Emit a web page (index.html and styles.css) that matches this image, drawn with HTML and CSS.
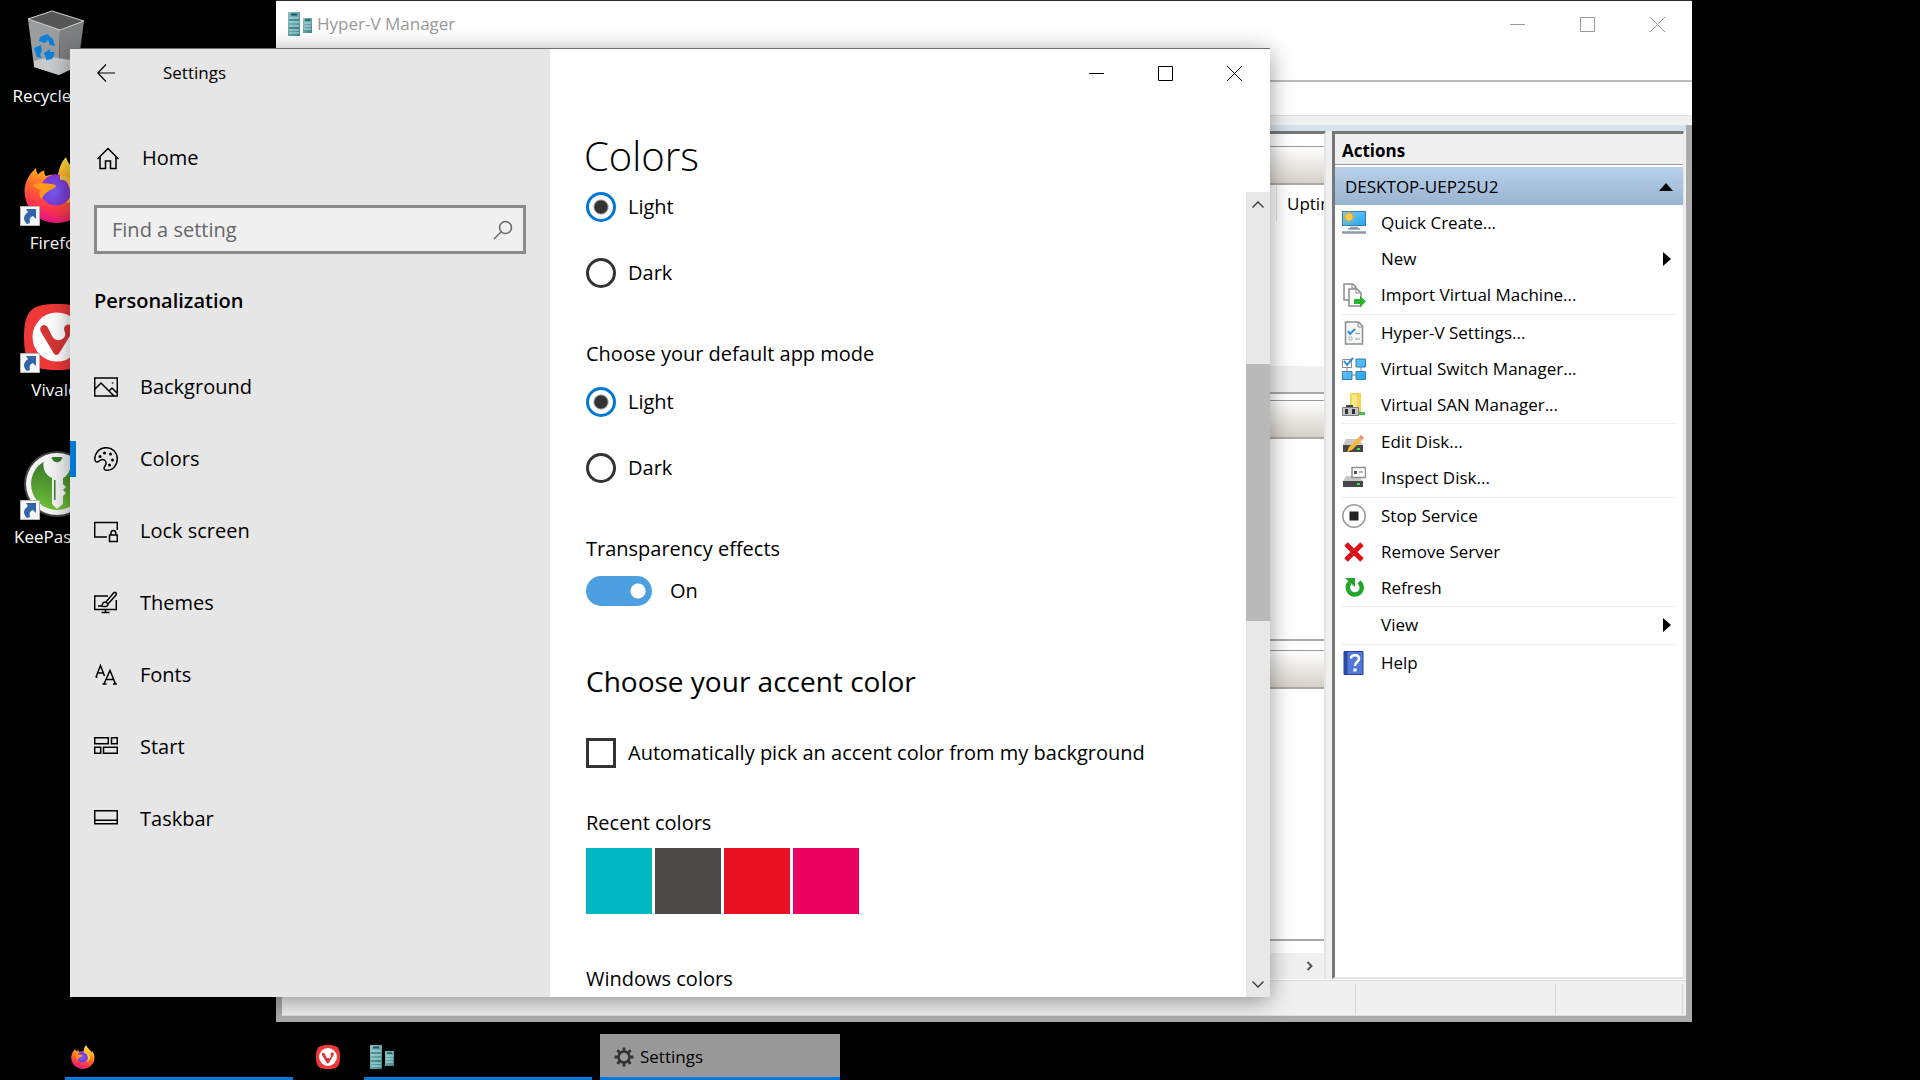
FILE: index.html
```html
<!DOCTYPE html>
<html lang="en">
<head>
    <meta charset="UTF-8">
    <meta name="viewport" content="width=device-width, initial-scale=1.0">
    <title>Desktop</title>
    <link rel="stylesheet" href="styles.css">
</head>
<body>
    <!-- Shared icons -->
    <svg class="defs" aria-hidden="true">
        <defs>
            <linearGradient id="fx-body" x1="0.7" y1="0" x2="0.35" y2="1">
                <stop offset="0" stop-color="#fff44f"/>
                <stop offset="0.3" stop-color="#ffb01f"/>
                <stop offset="0.55" stop-color="#ff6a2a"/>
                <stop offset="0.8" stop-color="#ff3450"/>
                <stop offset="1" stop-color="#e2108c"/>
            </linearGradient>
            <radialGradient id="fx-globe" cx="0.45" cy="0.55" r="0.6">
                <stop offset="0" stop-color="#7a5cf5"/>
                <stop offset="0.6" stop-color="#7542d8"/>
                <stop offset="1" stop-color="#a030cf"/>
            </radialGradient>
            <linearGradient id="teal" x1="0" y1="0" x2="1" y2="1">
                <stop offset="0" stop-color="#8cc0c4"/>
                <stop offset="1" stop-color="#3f868c"/>
            </linearGradient>
            <linearGradient id="screen" x1="0" y1="0" x2="1" y2="1">
                <stop offset="0" stop-color="#7fd0fb"/>
                <stop offset="1" stop-color="#22a4f5"/>
            </linearGradient>
            <linearGradient id="kp" x1="0" y1="0" x2="0" y2="1">
                <stop offset="0" stop-color="#35762a"/>
                <stop offset="1" stop-color="#70c038"/>
            </linearGradient>
        </defs>
        <symbol id="firefox" viewBox="0 0 66 66">
            <path fill="url(#fx-body)" d="M12 11C12 14 13 16 14 17.500C16 15 18 14 20.500 13.500C20 16 20.500 17.500 22 19C26 17.500 30 17.500 34 18C35 11 38 4 42 0C44 8 50 11 54 16C56 18.500 57 21 57 21L58 16C66 27 67 40 60 51C54 60 44 66 33 66C15 66 1 53 0.500 34C0.500 26 5 17 12 11Z"/>
            <circle cx="32" cy="33" r="15.500" fill="url(#fx-globe)"/>
            <path fill="#ff9a1f" d="M9 28C16 25 23 27 27 27C30 27 32 28 32 29C31 32 27 32 25 34C21 36 19 39 17 42C15 37 15 34 17 33C13 32 11 31 9 28Z"/>
            <path fill="#ffd23a" d="M36 23C41 22 44 26 45 30C48 35 47 42 42 46C49 45 54 38 52 30C50 24 46 20 36 18Z" opacity="0.9"/>
        </symbol>
        <symbol id="vivaldi" viewBox="0 0 66 66">
            <path fill="#ef3939" d="M33 0C58 0 66 6 66 33C66 60 58 66 33 66C8 66 0 60 0 33C0 6 8 0 33 0Z"/>
            <circle cx="33" cy="33" r="24.500" fill="#fff"/>
            <path fill="#d63535" d="M17 28C14 22 21 18 24 24L28 32C31 38 39 37 41 32C42 29 40 27 40 25C40 19 49 19 49 25C49 27 48 28 47 30L36 48C34 52 31 52 29 48Z"/>
        </symbol>
        <symbol id="servers" viewBox="0 0 24 24">
            <rect x="0" y="0" width="12" height="24" fill="url(#teal)"/>
            <path d="M3 2.500h6" stroke="#1f5860" stroke-width="2"/>
            <path d="M1 6h10M1 10h10M1 14h10M1 18h10M1 21h10" stroke="#b9e0e2" stroke-width="1"/>
            <path d="M1 8h10M1 16h10" stroke="#2d747b" stroke-width="1"/>
            <rect x="15" y="6" width="9" height="15" fill="url(#teal)"/>
            <path d="M17 8h5" stroke="#1f5860" stroke-width="1.500"/>
            <path d="M16 11h7M16 14h7M16 17h7" stroke="#b9e0e2"/>
        </symbol>
        <symbol id="shortcut" viewBox="0 0 20 20">
            <path d="M0.500 0.500h19v19h-19z" fill="#f6f6f6" stroke="#b5b5b5"/>
            <path fill="#3264a8" d="M6 3h10v10l-3-3c-3 1-4 3-3 7l-3 1c-5-5-3-9 1-12z"/>
        </symbol>
    </svg>

    <div class="desktop">
        <div class="shortcuts">
            <a class="shortcut" href="#">
                <svg class="shortcut-icon" viewBox="0 0 66 66">
                    <path fill="#565656" d="M4 9L28 1L60 11L36 20Z"/>
                    <path fill="#9a9c9d" d="M4 9L36 20L35 65L10 57Z"/>
                    <path fill="#7d7f80" d="M36 20L60 11L54 56L35 65Z"/>
                    <path fill="#c9cacc" d="M10 51L26 47L54 51L54 56L35 65L10 57Z"/>
                    <path fill="none" stroke="#d5d5d5" stroke-width="1" d="M4 9L28 1L60 11L36 20Z"/>
                    <path fill="#0f80d8" d="M16 27l7-3 6 5 2 7-5-1-2-5-3 3-6-2zM10 38l7-3 1 6-2 4 2 3-5-1zM20 43l6-4v3h5l-3 7-6 1 1 2z"/>
                </svg>
                <span>Recycle Bin</span>
            </a>
            <a class="shortcut" href="#">
                <svg class="shortcut-icon"><use href="#firefox"/></svg>
                <svg class="badge"><use href="#shortcut"/></svg>
                <span>Firefox</span>
            </a>
            <a class="shortcut" href="#">
                <svg class="shortcut-icon"><use href="#vivaldi"/></svg>
                <svg class="badge"><use href="#shortcut"/></svg>
                <span>Vivaldi</span>
            </a>
            <a class="shortcut" href="#">
                <svg class="shortcut-icon" viewBox="0 0 66 66">
                    <circle cx="33" cy="33" r="33" fill="#444"/>
                    <circle cx="33" cy="33" r="31" fill="#f4f4f4"/>
                    <circle cx="33" cy="33" r="26" fill="url(#kp)"/>
                    <path fill="#f4f4f4" d="M20 8h26c2 9-1 16-7 19v6l3 3-3 3 3 3-3 3v8l-6 5-5-5V27c-7-3-10-10-8-19z"/>
                    <path fill="#357a2a" d="M28 6h10c0 7-10 7-10 0zM30 29h1.500v20H30z"/>
                </svg>
                <svg class="badge"><use href="#shortcut"/></svg>
                <span>KeePassXC</span>
            </a>
        </div>

        <section class="window hyperv" aria-label="Hyper-V Manager">
            <header class="titlebar hyperv-title">
                <svg class="icon24"><use href="#servers"/></svg>
                <span class="title">Hyper-V Manager</span>
                <button class="winbtn" aria-label="Minimize"><svg viewBox="0 0 15 15"><path d="M0 7.500h15"/></svg></button>
                <button class="winbtn" aria-label="Maximize"><svg viewBox="0 0 15 15"><path d="M0.500 0.500h14v14h-14z"/></svg></button>
                <button class="winbtn" aria-label="Close"><svg viewBox="0 0 15 15"><path d="M0 0l15 15M15 0L0 15"/></svg></button>
            </header>
            <div class="menubar"></div>
            <div class="toolbar"></div>
            <div class="toolbar-edge"></div>
            <div class="frame">
                <div class="panes">
                    <div class="results">
                        <div class="result-section machines">
                            <div class="section-head"></div>
                            <div class="columns"><span class="column">Uptime</span></div>
                            <div class="list"></div>
                            <div class="hscroll"></div>
                        </div>
                        <div class="result-section checkpoints">
                            <div class="section-head"></div>
                        </div>
                        <div class="result-section details">
                            <div class="section-head"></div>
                        </div>
                        <div class="hscroll">
                            <svg viewBox="0 0 8 10"><path d="M1.500 1l4 4-4 4"/></svg>
                        </div>
                    </div>
                    <aside class="actions">
                        <h2>Actions</h2>
                        <button class="host">DESKTOP-UEP25U2
                            <svg viewBox="0 0 14 8"><path d="M0 8l7-8 7 8z"/></svg>
                        </button>
                        <div class="group">
                            <button class="action">
                                <svg viewBox="0 0 24 24">
                                    <rect x="0.500" y="0.500" width="23" height="14" fill="url(#screen)" stroke="#3b7da5"/>
                                    <path d="M8 16.500h8M6 18h12" stroke="#8b9aab" stroke-width="1.500"/>
                                    <path d="M0 21.500h24" stroke="#8b9aab" stroke-width="2.500"/>
                                    <path d="M7 0v12M1 6h12M3 2l8 8M11 2l-8 8" stroke="#f0a21c" stroke-width="1.500"/>
                                    <circle cx="7" cy="6" r="3.500" fill="#ffc93b"/>
                                </svg>
                                Quick Create...
                            </button>
                            <button class="action more">
                                <svg></svg>
                                New
                                <svg class="arrow" viewBox="0 0 8 14"><path d="M0 0l8 7-8 7z"/></svg>
                            </button>
                            <button class="action">
                                <svg viewBox="0 0 24 24">
                                    <path d="M2 1h9l3 3v13H2z" fill="#fff" stroke="#8c8c8c" stroke-width="1.500"/>
                                    <path d="M7 6h8l4 4v13H7z" fill="#fff" stroke="#8c8c8c" stroke-width="1.500"/>
                                    <path d="M10 1v4h4M14 6v4h4" fill="none" stroke="#8c8c8c"/>
                                    <path d="M12 16h6v-3l6 5.500-6 5.500v-3h-6z" fill="#28b52d"/>
                                </svg>
                                Import Virtual Machine...
                            </button>
                        </div>
                        <div class="group">
                            <button class="action">
                                <svg viewBox="0 0 24 24">
                                    <path d="M3.500 1h13l4 4v18h-17z" fill="#f4f6f8" stroke="#8c8c8c" stroke-width="1.500"/>
                                    <path d="M16 1v5h5" fill="none" stroke="#8c8c8c"/>
                                    <path d="M6 10l2 3 5-5" fill="none" stroke="#2b8fe0" stroke-width="2"/>
                                    <path d="M13 12.500h5M13 18h5" stroke="#9a9a9a"/>
                                    <path d="M7 16h3v3H7z" fill="none" stroke="#b5b5b5"/>
                                </svg>
                                Hyper-V Settings...
                            </button>
                            <button class="action">
                                <svg viewBox="0 0 24 24">
                                    <path d="M5 10v4M19 9v6M9 18h7" stroke="#8a8a8a"/>
                                    <path d="M0.500 2.500h9v8h-9z" fill="#fff" stroke="#8a8a8a"/>
                                    <path d="M14 2h9.500v8H14zM0.500 14.500h9.500v8H0.500zM14 14.500h9.500v8H14z" fill="url(#screen)" stroke="#3b7da5"/>
                                    <path d="M2 4l3 4 6-7" fill="none" stroke="#2b8fe0" stroke-width="2"/>
                                </svg>
                                Virtual Switch Manager...
                            </button>
                            <button class="action">
                                <svg viewBox="0 0 24 24">
                                    <path d="M8 0h11v20H8z" fill="#f5d552"/>
                                    <path d="M10 2h5v12h-5z" fill="#fae88f"/>
                                    <path d="M16 19h7v3h-7z" fill="#46c24a"/>
                                    <path d="M4 13h7" stroke="#444" stroke-width="2"/>
                                    <path d="M0.500 14.500h16v8h-16z" fill="#c4c4c8" stroke="#7e7e82"/>
                                    <path d="M3 16h3v5H3zM10 16h3v5h-3z" fill="#333"/>
                                </svg>
                                Virtual SAN Manager...
                            </button>
                        </div>
                        <div class="group">
                            <button class="action">
                                <svg viewBox="0 0 24 24">
                                    <path d="M4 9h13l4 6H1z" fill="#c8c8c8"/>
                                    <path d="M1 15h20v7H1z" fill="#454545"/>
                                    <path d="M15 18h3v2h-3z" fill="#3fe04b"/>
                                    <path d="M5 22l2-5L17 7l3 3L10 20z" fill="#f5b836"/>
                                    <path d="M17 7l2-2 3 3-2 2z" fill="#e88888"/>
                                </svg>
                                Edit Disk...
                            </button>
                            <button class="action">
                                <svg viewBox="0 0 24 24">
                                    <path d="M4 10h13l4 5H1z" fill="#c8c8c8"/>
                                    <path d="M1 15h20v6H1z" fill="#454545"/>
                                    <path d="M15 17h3v2h-3z" fill="#3fe04b"/>
                                    <path d="M10 1.500h13.500v10H10z" fill="#fff" stroke="#8a8f94" stroke-width="1.500"/>
                                    <path d="M12 5h3v3h-3z" fill="#555"/>
                                    <path d="M17 6h4" stroke="#777"/>
                                </svg>
                                Inspect Disk...
                            </button>
                        </div>
                        <div class="group">
                            <button class="action">
                                <svg viewBox="0 0 24 24">
                                    <circle cx="12" cy="12" r="11.250" fill="#fff" stroke="#999" stroke-width="1.500"/>
                                    <path d="M7.500 7.500h9v9h-9z" fill="#222"/>
                                </svg>
                                Stop Service
                            </button>
                            <button class="action">
                                <svg viewBox="0 0 24 24"><path d="M4 4l16 16M20 4L4 20" stroke="#e00f17" stroke-width="5"/></svg>
                                Remove Server
                            </button>
                            <button class="action">
                                <svg viewBox="0 0 24 24">
                                    <path d="M8 6.500a7 7 0 1 0 9-0.500" fill="none" stroke="#22a52b" stroke-width="4.500"/>
                                    <path d="M3 2h10v9z" fill="#22a52b"/>
                                </svg>
                                Refresh
                            </button>
                        </div>
                        <div class="group">
                            <button class="action more">
                                <svg></svg>
                                View
                                <svg class="arrow" viewBox="0 0 8 14"><path d="M0 0l8 7-8 7z"/></svg>
                            </button>
                        </div>
                        <div class="group">
                            <button class="action">
                                <svg viewBox="0 0 24 24">
                                    <path d="M2 0.500h19v23H2z" fill="#5577d8" stroke="#20409c"/>
                                    <path d="M2 0.500h3.500v23H2z" fill="#2a4aa6"/>
                                    <path d="M9 7.500C9 3 17 3 17 7.500C17 11 13 11 13 15" fill="none" stroke="#fff" stroke-width="2.500"/>
                                    <circle cx="13" cy="19" r="1.800" fill="#fff"/>
                                </svg>
                                Help
                            </button>
                        </div>
                    </aside>
                </div>
                <div class="statusbar"><span></span><span></span><span></span></div>
            </div>
        </section>

        <section class="window settings" aria-label="Settings">
            <nav class="sidebar">
                <header class="titlebar">
                    <button class="back" aria-label="Back"><svg viewBox="0 0 18 18"><path d="M18 9H1M9 0.500L0.800 9 9 17.500"/></svg></button>
                    <span class="title">Settings</span>
                </header>
                <a class="nav-item home" href="#">
                    <svg viewBox="0 0 24 24"><path d="M1.500 13L12 2.500 22.500 13M4 11v11.500h5.500V15h5v7.500H20V11"/></svg>
                    Home
                </a>
                <div class="search">
                    <input type="text" placeholder="Find a setting" aria-label="Find a setting">
                    <svg viewBox="0 0 20 20"><circle cx="12.500" cy="7.500" r="6"/><path d="M8.500 11.500L1 19"/></svg>
                </div>
                <h2>Personalization</h2>
                <a class="nav-item" href="#">
                    <svg viewBox="0 0 24 24"><path d="M0.700 3h22.600v18H0.700zM1 14l6-6 13 13M15 16l3-3 5 5"/><circle class="fill" cx="18.500" cy="8" r="0.800"/></svg>
                    Background
                </a>
                <a class="nav-item selected" href="#">
                    <svg viewBox="0 0 24 24">
                        <path d="M12 0.700C19 0.700 23.300 6 23.300 12C23.300 18 19 23.300 13 23.300C9.500 23.300 9.500 21 11 19C13 16 12 12.500 8.500 12.500C6 12.500 5 15 3 15C-1.500 15 0.700 0.700 12 0.700Z"/>
                        <g class="fill"><circle cx="6" cy="9.500" r="1.500"/><circle cx="10.500" cy="6" r="1.500"/><circle cx="16.500" cy="7" r="1.500"/><circle cx="18.500" cy="13" r="1.500"/><circle cx="15.500" cy="18" r="1.500"/></g>
                    </svg>
                    Colors
                </a>
                <a class="nav-item" href="#">
                    <svg viewBox="0 0 24 24"><path d="M13 18H0.700V3.500h22.600V11M15.500 16h7.800v6.500h-7.800zM17 16v-2c0-3.500 4.800-3.500 4.800 0v2"/></svg>
                    Lock screen
                </a>
                <a class="nav-item" href="#">
                    <svg viewBox="0 0 24 24"><path d="M14 5H0.700v13.500h21.600V9M11.500 18.500v3M7.500 21.500h8M4 15h4c0-3 2-4 4-4M12 11l7.500-9c1.500-1.500 3.500 0 2.500 2l-8 9M12 11l2 2c0 3-4 3-6 2"/></svg>
                    Themes
                </a>
                <a class="nav-item" href="#">
                    <svg viewBox="0 0 24 24"><path d="M2 14L6.500 2.500 10.500 13M3.500 10h6M10 21L16 7.500 21.500 21M12 16.500h8M8.500 21h4M19 21h4M1.500 14h2"/></svg>
                    Fonts
                </a>
                <a class="nav-item" href="#">
                    <svg viewBox="0 0 24 24"><path d="M0.700 2.700h13.600v6H0.700zM17.500 2.700h5.800v6h-5.800zM0.700 12.200h6v6h-6zM9.500 12.200h13.800v6H9.500z"/></svg>
                    Start
                </a>
                <a class="nav-item" href="#">
                    <svg viewBox="0 0 24 24"><path d="M0.700 3.700h22.600v13H0.700zM1 13.300h22"/></svg>
                    Taskbar
                </a>
            </nav>

            <main class="page">
                <header class="titlebar controls">
                    <button class="winbtn" aria-label="Minimize"><svg viewBox="0 0 15 15"><path d="M0 7.500h15"/></svg></button>
                    <button class="winbtn" aria-label="Maximize"><svg viewBox="0 0 15 15"><path d="M0.500 0.500h14v14h-14z"/></svg></button>
                    <button class="winbtn" aria-label="Close"><svg viewBox="0 0 15 15"><path d="M0 0l15 15M15 0L0 15"/></svg></button>
                </header>
                <h1>Colors</h1>
                <div class="scroller">
                    <div class="content">
                        <div class="choices" role="radiogroup" aria-label="Default Windows mode">
                            <label class="choice"><input type="radio" name="windows-mode" checked>Light</label>
                            <label class="choice"><input type="radio" name="windows-mode">Dark</label>
                        </div>
                        <p class="caption" id="app-mode">Choose your default app mode</p>
                        <div class="choices" role="radiogroup" aria-labelledby="app-mode">
                            <label class="choice"><input type="radio" name="app-mode" checked>Light</label>
                            <label class="choice"><input type="radio" name="app-mode">Dark</label>
                        </div>
                        <p class="caption" id="transparency">Transparency effects</p>
                        <label class="choice toggle"><input type="checkbox" aria-labelledby="transparency" checked>On</label>
                        <h2>Choose your accent color</h2>
                        <label class="choice"><input type="checkbox">Automatically pick an accent color from my background</label>
                        <p class="caption recent">Recent colors</p>
                        <div class="swatches">
                            <button class="swatch teal" aria-label="Teal"></button>
                            <button class="swatch gray" aria-label="Gray"></button>
                            <button class="swatch red" aria-label="Red"></button>
                            <button class="swatch pink" aria-label="Pink"></button>
                        </div>
                        <p class="caption">Windows colors</p>
                    </div>
                    <div class="scrollbar">
                        <button aria-label="Scroll up"><svg viewBox="0 0 12 7"><path d="M0.500 6.500L6 1l5.500 5.500"/></svg></button>
                        <div class="track"><div class="thumb"></div></div>
                        <button aria-label="Scroll down"><svg viewBox="0 0 12 7"><path d="M0.500 0.500L6 6l5.500-5.500"/></svg></button>
                    </div>
                </div>
            </main>
        </section>

        <footer class="taskbar">
            <button class="task running" aria-label="Firefox"><svg><use href="#firefox"/></svg></button>
            <button class="task pinned" aria-label="Vivaldi"><svg><use href="#vivaldi"/></svg></button>
            <button class="task running" aria-label="Hyper-V Manager"><svg><use href="#servers"/></svg></button>
            <button class="task running active">
                <svg class="gear" viewBox="0 0 20 20">
                    <circle cx="10" cy="10" r="5.500" fill="none" stroke="#333" stroke-width="2.500"/>
                    <path d="M10 0.500v4M10 15.500v4M0.500 10h4M15.500 10h4M3.300 3.300l2.800 2.800M13.900 13.900l2.800 2.800M16.700 3.300l-2.800 2.800M6.100 13.900l-2.800 2.800" stroke="#333" stroke-width="2.800"/>
                </svg>
                Settings
            </button>
        </footer>
    </div>
</body>
</html>
```

FILE: styles.css
```css
* {
    box-sizing: border-box;
}

body {
    margin: 0;
    background: #000;
    color: #000;
    font-family: "Open Sans", sans-serif;
    font-size: 20px;
    line-height: 28px;
}

button {
    border: 0;
    padding: 0;
    background: none;
    color: inherit;
    font: inherit;
    text-align: left;
}

a {
    color: inherit;
    text-decoration: none;
}

h1, h2, p {
    margin: 0;
    font-weight: normal;
}

.defs {
    position: absolute;
    width: 0;
    height: 0;
}

.desktop {
    position: relative;
    height: 100vh;
    overflow: hidden;
}

/* Desktop icons */
.shortcuts {
    display: flex;
    flex-direction: column;
    width: 114px;
    padding-top: 10px;
    color: #fff;
    font-size: 17px;
    line-height: 24px;
}

.shortcut {
    position: relative;
    display: flex;
    flex-direction: column;
    align-items: center;
    height: 147px;
    gap: 8px;
    white-space: nowrap;
}

.shortcut-icon {
    width: 66px;
    height: 66px;
    flex: none;
}

.badge {
    position: absolute;
    left: 20px;
    top: 49px;
    width: 20px;
    height: 20px;
}

/* Windows */
.window {
    position: absolute;
    display: flex;
}

.titlebar {
    display: flex;
    align-items: center;
    height: 48px;
    flex: none;
    font-size: 17px;
}

.winbtn {
    display: flex;
    align-items: center;
    justify-content: center;
    width: 69px;
    height: 100%;
}

.winbtn svg {
    width: 15px;
    height: 15px;
    fill: none;
    stroke: currentColor;
}

.icon24 {
    width: 24px;
    height: 24px;
}

/* Hyper-V Manager */
.hyperv {
    left: 276px;
    top: 0;
    right: 228px;
    bottom: 58px;
    flex-direction: column;
    background: #fff;
    border-top: 1px solid #2b2b2b;
    font-size: 17px;
    line-height: 24px;
}

.hyperv-title {
    height: 46px;
    padding-left: 12px;
    color: #999;
}

.hyperv-title .title {
    flex: 1;
    padding-left: 5px;
}

.hyperv-title .winbtn {
    width: 70px;
}

.menubar {
    height: 35px;
    flex: none;
    border-bottom: 2px solid #b9bbb9;
}

.toolbar {
    height: 34px;
    flex: none;
    border-bottom: 1px solid #dedede;
}

.toolbar-edge {
    height: 9px;
    flex: none;
    background: #f0f0f0;
}

.frame {
    flex: 1;
    display: flex;
    flex-direction: column;
    min-height: 0;
    border: 6px solid #ababab;
    border-top: 0;
    background: #f0f0f0;
}

.panes {
    flex: 1;
    display: flex;
    gap: 6px;
    min-height: 0;
    padding-right: 2px;
    border-top: 6px solid #d5e2ef;
    border-bottom: 1px solid #fff;
}

.results {
    flex: 1;
    display: flex;
    flex-direction: column;
    overflow: hidden;
    background: #fff;
    border-top: 3px solid #777;
    border-right: 2px solid #e3e3e3;
}

.result-section {
    display: flex;
    flex-direction: column;
    flex: none;
    border-bottom: 2px solid #a8a8a8;
}

.section-head {
    height: 39px;
    flex: none;
    border-top: 1px solid #999;
    border-bottom: 2px solid #aca9a2;
    background: linear-gradient(#fff, #d4d0c8);
}

.machines {
    height: 248px;
    margin-top: 12px;
}

.columns {
    display: flex;
    justify-content: flex-end;
    height: 36px;
}

.column {
    width: 48px;
    padding: 7px 0 0 10px;
    border-left: 1px solid #e0e0e0;
    overflow: hidden;
}

.list {
    flex: 1;
}

.checkpoints {
    height: 241px;
    margin-top: 6px;
}

.details {
    flex: 1;
    margin-top: 9px;
    margin-bottom: 12px;
}

.hscroll {
    display: flex;
    align-items: center;
    justify-content: flex-end;
    height: 26px;
    flex: none;
    padding-right: 10px;
    background: #f0f0f0;
}

.hscroll svg {
    width: 8px;
    height: 10px;
    fill: none;
    stroke: #555;
    stroke-width: 2;
}

.actions {
    width: 352px;
    background: #fff;
    border: 3px solid #777;
    border-right: 1px solid #e3e3e3;
    border-bottom: 2px solid #e3e3e3;
}

.actions h2 {
    height: 31px;
    padding: 5px 7px 0;
    background: #f0f0f0;
    border-bottom: 1px solid #999;
    font-size: 17px;
    font-weight: 700;
}

.host {
    display: flex;
    align-items: center;
    justify-content: space-between;
    width: 100%;
    height: 38px;
    margin-top: 2px;
    padding: 1px 10px 0;
    background: linear-gradient(#b9d1ea, #99b4d1);
}

.host svg {
    width: 14px;
    height: 8px;
}

.group {
    margin: 0 8px 0 7px;
    border-bottom: 1px solid #ececec;
}

.group:nth-of-type(odd) {
    padding-bottom: 1px;
}

.group:last-child {
    border-bottom: 0;
}

.action {
    display: flex;
    align-items: center;
    gap: 15px;
    width: 100%;
    height: 36px;
}

.action svg {
    width: 24px;
    height: 24px;
    flex: none;
}

.action .arrow {
    width: 8px;
    height: 14px;
    margin: 0 4px 0 auto;
}

.statusbar {
    display: flex;
    height: 36px;
    flex: none;
    padding: 3px 3px 1px 0;
    border-top: 1px solid #dcdcdc;
    border-bottom: 1px solid #dcdcdc;
}

.statusbar span {
    flex: 1;
    border-right: 1px solid #d7d7d7;
}

.statusbar span:nth-child(2) {
    flex: 0 0 200px;
}

.statusbar span:nth-child(3) {
    flex: 0 0 127px;
}

/* Settings */
.settings {
    left: 70px;
    top: 48px;
    width: 1200px;
    max-width: calc(100vw - 140px);
    bottom: 83px;
    border-top: 1px solid #6f6f6f;
    background: #fff;
    box-shadow: 0 4px 22px rgba(0, 0, 0, 0.4);
}

.sidebar {
    width: 40%;
    background: #e6e6e6;
}

.back {
    display: flex;
    justify-content: center;
    width: 72px;
}

.back svg {
    width: 18px;
    height: 18px;
    fill: none;
    stroke: #000;
    stroke-width: 1.2;
}

.sidebar .title {
    padding-left: 21px;
}

.nav-item {
    display: flex;
    align-items: center;
    gap: 22px;
    height: 72px;
    padding-left: 24px;
}

.nav-item svg {
    width: 24px;
    height: 24px;
    fill: none;
    stroke: #000;
    stroke-width: 1.5;
}

.nav-item .fill {
    fill: #000;
    stroke: none;
}

.nav-item.home {
    height: 44px;
    margin-top: 39px;
    padding-left: 26px;
}

.nav-item.selected {
    background: linear-gradient(#0078d7, #0078d7) left center / 6px 36px no-repeat;
}

.search {
    display: flex;
    align-items: center;
    height: 49px;
    margin: 25px 24px 0;
    padding-right: 10px;
    background: #f0f0f0;
    border: 3px solid #8a8a8a;
}

.search input {
    flex: 1;
    min-width: 0;
    padding: 0 15px;
    border: 0;
    outline: 0;
    background: none;
    font: inherit;
}

.search input::placeholder {
    color: #666;
}

.search svg {
    width: 20px;
    height: 20px;
    fill: none;
    stroke: #666;
    stroke-width: 1.5;
}

.sidebar h2 {
    margin: 33px 24px 36px;
    font-size: 20px;
    font-weight: 600;
}

.page {
    flex: 1;
    display: flex;
    flex-direction: column;
    min-width: 0;
}

.controls {
    justify-content: flex-end;
    padding-right: 1px;
}

.page h1 {
    margin: 31px 34px 8px;
    font-size: 40px;
    font-weight: 300;
    line-height: 56px;
}

.scroller {
    flex: 1;
    display: flex;
    min-height: 0;
}

.content {
    flex: 1;
    padding-left: 36px;
    overflow: hidden;
}

.choices {
    display: flex;
    flex-direction: column;
    gap: 36px;
    margin-bottom: 52px;
}

.choice {
    display: flex;
    align-items: center;
    gap: 12px;
    height: 30px;
}

.choice input {
    appearance: none;
    width: 30px;
    height: 30px;
    margin: 0;
    border: 3px solid #333;
    background: #fff;
}

.choice input[type="radio"] {
    border-radius: 50%;
}

.choice input[type="radio"]:checked {
    border-color: #0078d7;
    background: radial-gradient(circle, #333 6px, #fff 8px);
}

.choice.toggle {
    gap: 18px;
}

.choice.toggle input {
    width: 66px;
    border: 0;
    border-radius: 15px;
    background: radial-gradient(circle at 52px 15px, #fff 7px, #4ca0e0 8px);
}

.caption {
    margin-bottom: 19px;
}

#transparency {
    margin-bottom: 13px;
}

.content h2 {
    margin: 55px 0 37px;
    font-size: 28px;
    line-height: 40px;
}

.recent {
    margin: 41px 0 11px;
}

.swatches {
    display: flex;
    gap: 3px;
    margin-bottom: 51px;
}

.swatch {
    width: 66px;
    height: 66px;
}

.teal {
    background: #00b7c3;
}

.gray {
    background: #4c4a48;
}

.red {
    background: #e81123;
}

.pink {
    background: #ea005e;
}

.scrollbar {
    display: flex;
    flex-direction: column;
    width: 24px;
    background: #e8e8e8;
}

.scrollbar button {
    display: flex;
    align-items: center;
    justify-content: center;
    height: 25px;
}

.scrollbar svg {
    width: 12px;
    height: 7px;
    fill: none;
    stroke: #333;
    stroke-width: 1.3;
}

.track {
    flex: 1;
    padding-top: 147px;
}

.thumb {
    height: 257px;
    background: #b9b9b9;
}

/* Taskbar */
.taskbar {
    position: absolute;
    left: 0;
    right: 0;
    bottom: 0;
    display: flex;
    gap: 8px;
    height: 46px;
    padding-left: 65px;
    font-size: 17px;
}

.task {
    display: flex;
    align-items: center;
    gap: 6px;
    padding: 2px 0 0 6px;
    border-bottom: 3px solid transparent;
}

.task svg {
    width: 24px;
    height: 24px;
}

.task.running {
    width: 228px;
    border-color: #0078d7;
}

.task.pinned {
    width: 55px;
    padding-left: 15px;
}

.task.active {
    width: 240px;
    padding-left: 14px;
    background: #999;
}

.task .gear {
    width: 20px;
    height: 20px;
}
```
